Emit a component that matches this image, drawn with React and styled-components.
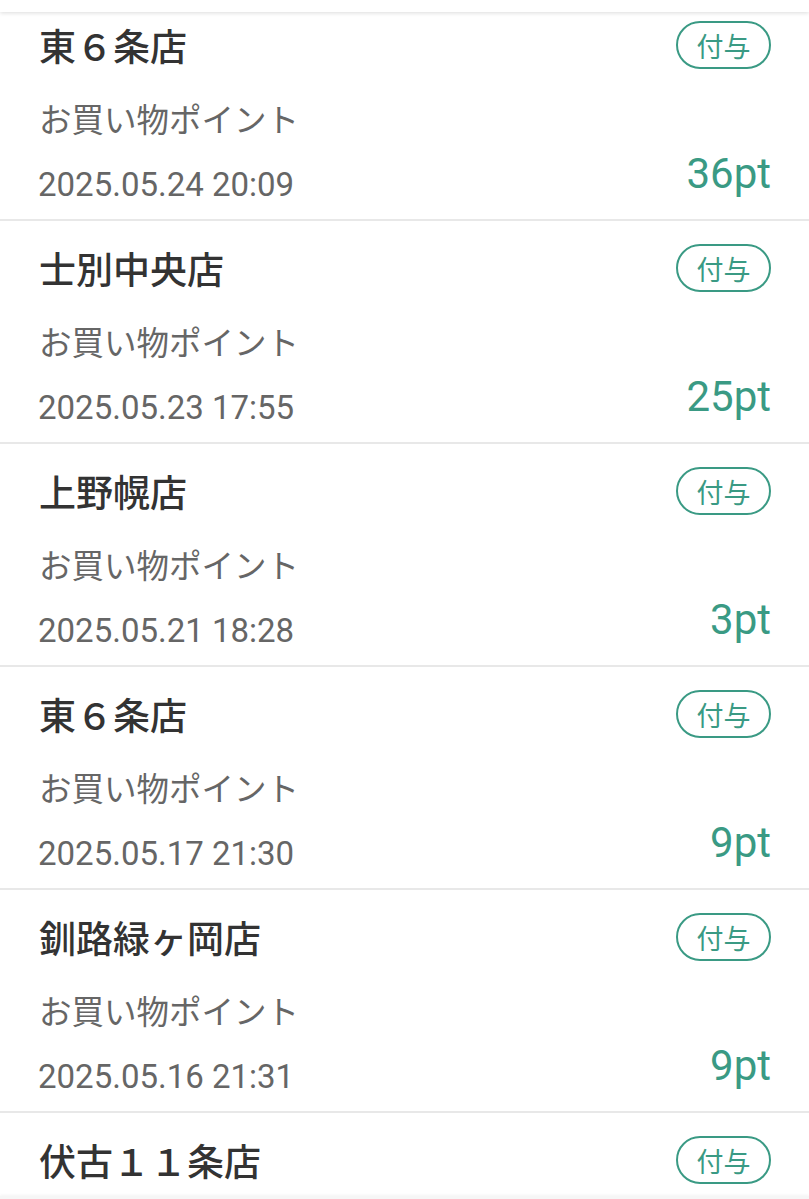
import styled, { createGlobalStyle } from "styled-components";

const GlobalStyle = createGlobalStyle`
  html, body {
    margin: 0;
    padding: 0;
    background: #ffffff;
  }
  body {
    font-family: Roboto, "Noto Sans CJK JP", sans-serif;
    overflow: hidden;
  }
`;

const TEAL = "#3a9a84";

const history = [
  { store: "東６条店", date: "2025.05.24 20:09", points: 36 },
  { store: "士別中央店", date: "2025.05.23 17:55", points: 25 },
  { store: "上野幌店", date: "2025.05.21 18:28", points: 3 },
  { store: "東６条店", date: "2025.05.17 21:30", points: 9 },
  { store: "釧路緑ヶ岡店", date: "2025.05.16 21:31", points: 9 },
  { store: "伏古１１条店", date: "2025.05.14 19:02", points: 12 },
];

const Page = styled.div`
  width: 100%;
  height: 100vh;
  overflow: hidden;
  background: #ffffff;
`;

// app bar that sits over the scrolled list; only its bottom edge shows
const TopBar = styled.div`
  position: fixed;
  top: 0;
  left: 0;
  right: 0;
  height: 12px;
  background: #ffffff;
  box-shadow: 0 1px 4px rgba(0, 0, 0, 0.14);
  z-index: 2;
`;

// edge of the bottom navigation, just peeking in
const BottomBar = styled.div`
  position: fixed;
  bottom: 0;
  left: 0;
  right: 0;
  height: 3px;
  background: #f6f6f6;
  box-shadow: 0 -1px 3px rgba(0, 0, 0, 0.05);
  z-index: 2;
`;

const List = styled.ul`
  list-style: none;
  margin: -2px 0 0;
  padding: 0;
`;

const Item = styled.li`
  display: flex;
  flex-direction: column;
  padding: 22px 38px 14px 38px;
  border-bottom: 2px solid #e8e8e8;
`;

const HeadRow = styled.div`
  display: flex;
  align-items: center;
  justify-content: space-between;
  height: 50px;
`;

const Store = styled.div`
  font-family: "Noto Sans CJK JP", sans-serif;
  font-size: 37px;
  font-weight: 500;
  line-height: 50px;
  color: #333333;
  padding-left: 1px;
`;

const Badge = styled.span`
  display: inline-flex;
  align-items: center;
  justify-content: center;
  box-sizing: border-box;
  width: 95px;
  height: 48px;
  border: 2px solid ${TEAL};
  border-radius: 24px;
  font-family: "Noto Sans CJK JP", sans-serif;
  font-size: 27px;
  line-height: 1;
  color: ${TEAL};
`;

const Kind = styled.div`
  margin-top: 25px;
  font-family: "Noto Sans CJK JP", sans-serif;
  font-size: 32.5px;
  line-height: 46px;
  color: #666666;
  padding-left: 1px;
`;

const FootRow = styled.div`
  display: flex;
  align-items: flex-end;
  justify-content: space-between;
  margin-top: 8px;
`;

const Stamp = styled.div`
  font-family: Roboto, sans-serif;
  font-size: 33px;
  line-height: 40px;
  color: #666666;
`;

const Points = styled.div`
  font-family: Roboto, sans-serif;
  font-size: 42px;
  line-height: 50px;
  margin-bottom: 6px;
  color: ${TEAL};
`;

const App = () => {
  return (
    <Page>
      <GlobalStyle />
      <TopBar />
      <List>
        {history.map((h, i) => (
          <Item key={i}>
            <HeadRow>
              <Store>{h.store}</Store>
              <Badge>付与</Badge>
            </HeadRow>
            <Kind>お買い物ポイント</Kind>
            <FootRow>
              <Stamp>{h.date}</Stamp>
              <Points>{h.points}pt</Points>
            </FootRow>
          </Item>
        ))}
      </List>
      <BottomBar />
    </Page>
  );
};

export default App;
